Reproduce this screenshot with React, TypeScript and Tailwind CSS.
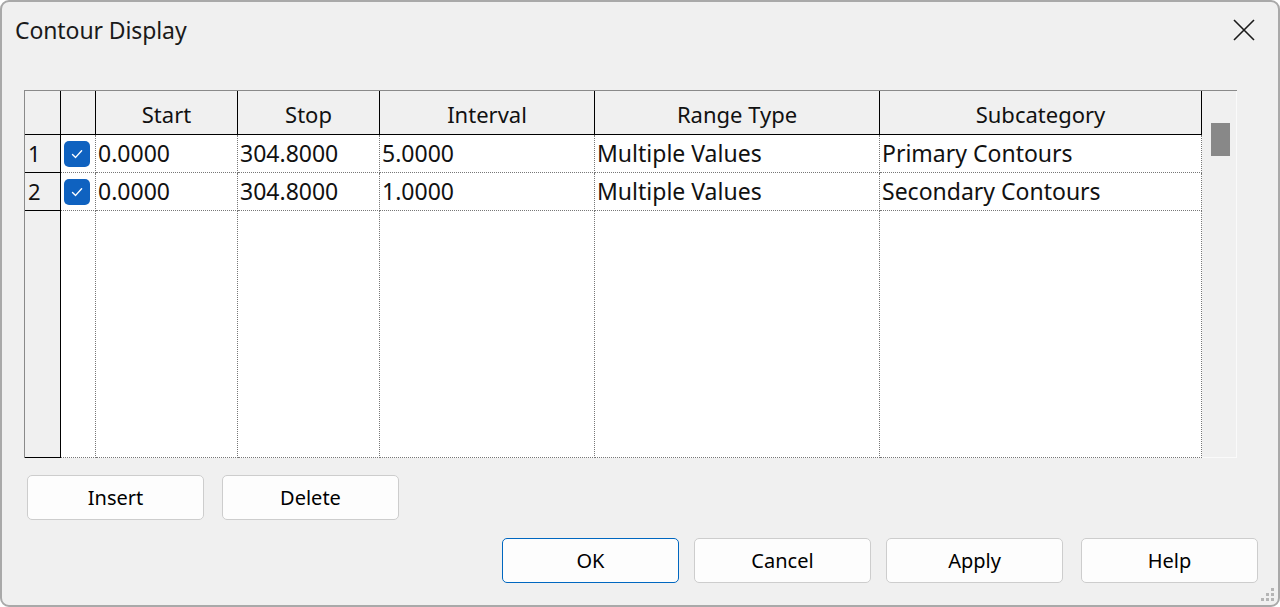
import React from 'react';

const font = { fontFamily: '"Noto Sans", "Open Sans", Arial, sans-serif' };

const columns = [
  { label: '', w: 'w-[36px]' },
  { label: '', w: 'w-[35px]' },
  { label: 'Start', w: 'w-[142px]' },
  { label: 'Stop', w: 'w-[142px]' },
  { label: 'Interval', w: 'w-[215px]' },
  { label: 'Range Type', w: 'w-[285px]' },
  { label: 'Subcategory', w: 'w-[322px]' },
];

const rows = [
  ['1', '0.0000', '304.8000', '5.0000', 'Multiple Values', 'Primary Contours'],
  ['2', '0.0000', '304.8000', '1.0000', 'Multiple Values', 'Secondary Contours'],
];

const Check: React.FC = () => (
  <div className="w-[26px] h-[26px] rounded-[5px] bg-[#0f62c0] flex items-center justify-center">
    <svg width="16" height="16" viewBox="0 0 16 16" fill="none">
      <path d="M3.5 8.5 L6.6 11.4 L12.6 4.8" stroke="white" strokeWidth="1.4" strokeLinecap="round" strokeLinejoin="round" />
    </svg>
  </div>
);

const Button: React.FC<{ label: string; primary?: boolean; className?: string }> = ({ label, primary, className }) => (
  <div
    className={
      'w-[177px] h-[45px] rounded-[5px] bg-[#fdfdfd] border flex items-center justify-center text-[20px] text-black ' +
      (primary ? 'border-[#0067c0] ' : 'border-[#cdcdcd] ') +
      (className ?? '')
    }
  >
    {label}
  </div>
);

const App: React.FC = () => {
  return (
    <div style={font} className="w-[1280px] h-[607px] bg-white">
      <div className="w-full h-full border-2 border-[#a9a9a9] rounded-[9px] bg-[#f0f0f0] flex flex-col relative overflow-hidden">
        {/* title bar */}
        <div className="h-[56px] flex items-center justify-between pl-[13px] pr-[23px] shrink-0">
          <span className="text-[23px] text-[#1a1a1a] tracking-[-0.1px]">Contour Display</span>
          <svg width="22" height="22" viewBox="0 0 22 22">
            <path d="M1 1 L21 21 M21 1 L1 21" stroke="#1a1a1a" strokeWidth="1.6" />
          </svg>
        </div>

        {/* grid */}
        <div className="ml-[22px] mt-[32px] w-[1213px] h-[368px] flex border-t border-l border-[#8a8a8a] shrink-0">
          <div className="w-[1177px] flex flex-col text-[23px] text-[#111]">
            {/* header */}
            <div className="flex h-[44px] text-[22px]">
              {columns.map((c, i) => (
                <div
                  key={i}
                  className={`${c.w} h-full bg-[#f0f0f0] border-r border-b border-black flex items-center justify-center pt-[4px]`}
                >
                  {c.label}
                </div>
              ))}
            </div>
            {rows.map((r) => (
              <div key={r[0]} className="flex h-[38px]">
                <div className="w-[36px] h-full bg-[#f0f0f0] border-r border-b border-black flex items-center pl-[3px] text-[22px]">
                  {r[0]}
                </div>
                <div className="w-[35px] h-full bg-white border-r border-b border-dotted border-[#777] flex items-center pl-[3px]">
                  <Check />
                </div>
                {r.slice(1).map((v, j) => (
                  <div
                    key={j}
                    className={`${columns[j + 2].w} h-full bg-white border-r border-b border-dotted border-[#777] flex items-center pl-[2px] whitespace-nowrap`}
                  >
                    {v}
                  </div>
                ))}
              </div>
            ))}
            {/* empty filler */}
            <div className="flex flex-1">
              <div className="w-[36px] h-full bg-[#f0f0f0] border-r border-b border-black" />
              {columns.slice(1).map((c, i) => (
                <div key={i} className={`${c.w} h-full bg-white border-r border-b border-dotted border-[#777]`} />
              ))}
            </div>
          </div>
          {/* scrollbar */}
          <div className="w-[36px] h-full bg-[#f0f0f0] border-r border-b border-[#fafafa] pt-[32px] pl-[9px]">
            <div className="w-[19px] h-[33px] bg-[#888888]" />
          </div>
        </div>

        {/* insert / delete */}
        <div className="flex ml-[25px] mt-[17px] gap-[18px] shrink-0">
          <Button label="Insert" className="h-[44px]" />
          <Button label="Delete" className="h-[44px]" />
        </div>

        {/* dialog buttons */}
        <div className="flex justify-end pr-[20px] mt-[18px] shrink-0">
          <Button label="OK" primary />
          <Button label="Cancel" className="ml-[15px]" />
          <Button label="Apply" className="ml-[15px]" />
          <Button label="Help" className="ml-[18px]" />
        </div>

        {/* resize grip */}
        <svg className="absolute right-[2px] bottom-[2px]" width="16" height="16" viewBox="0 0 16 16">
          <rect x="11" y="1" width="3" height="3" fill="#b5b5b5" />
          <rect x="6" y="6" width="3" height="3" fill="#b5b5b5" />
          <rect x="11" y="6" width="3" height="3" fill="#b5b5b5" />
          <rect x="1" y="11" width="3" height="3" fill="#b5b5b5" />
          <rect x="6" y="11" width="3" height="3" fill="#b5b5b5" />
          <rect x="11" y="11" width="3" height="3" fill="#b5b5b5" />
        </svg>
      </div>
    </div>
  );
};

export default App;
